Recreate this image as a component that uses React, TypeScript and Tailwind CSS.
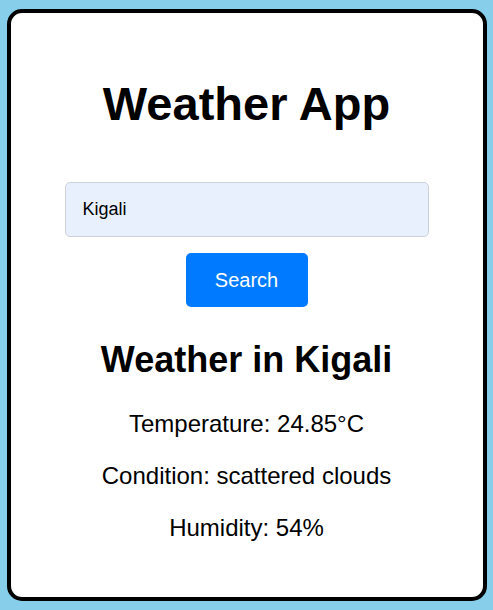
import React, { useState } from 'react';

const font = { fontFamily: '"Liberation Sans", Arial, sans-serif' };

export default function App() {
  const [city, setCity] = useState('Kigali');

  return (
    <div className="flex h-screen items-center justify-center bg-[#87ceeb]" style={font}>
      <div className="flex w-[480px] flex-col items-center rounded-[15px] border-4 border-black bg-white pt-[64px] pb-[55px] text-black">
        <h1 className="text-[47px] font-bold leading-[54px]">Weather App</h1>

        <input
          type="text"
          value={city}
          onChange={(e) => setCity(e.target.value)}
          className="mt-[51px] h-[55px] w-[364px] rounded-[5px] border border-[#cdd1d8] bg-[#e8f0fe] px-[17px] text-[18px] text-black outline-none"
          style={font}
        />
        <button
          className="mt-[16px] h-[54px] w-[122px] rounded-[5px] bg-[#007bff] text-[20px] text-white"
          style={font}
        >
          Search
        </button>

        <h2 className="mt-[32px] text-[36px] font-bold leading-[41px]">Weather in {city}</h2>
        <p className="mt-[30px] text-[24px] leading-[28px]">Temperature: 24.85°C</p>
        <p className="mt-[24px] text-[24px] leading-[28px]">Condition: scattered clouds</p>
        <p className="mt-[24px] text-[24px] leading-[28px]">Humidity: 54%</p>
      </div>
    </div>
  );
}
